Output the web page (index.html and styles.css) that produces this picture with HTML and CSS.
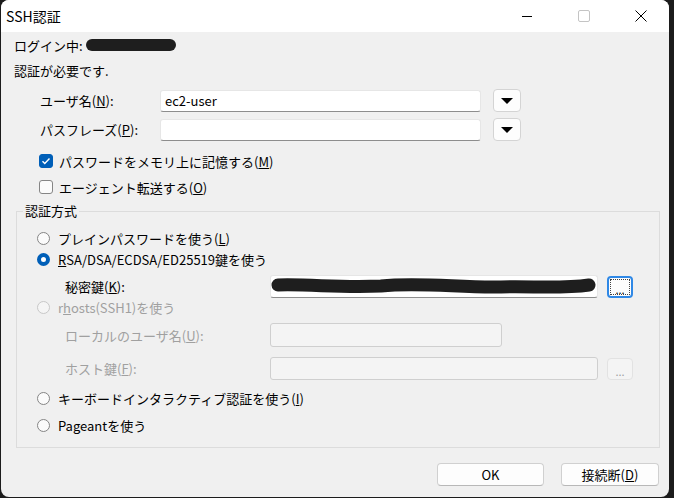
FILE: index.html
```html
<!DOCTYPE html>
<html lang="ja">
<head>
    <meta charset="UTF-8">
    <title>SSH認証</title>
    <link rel="stylesheet" href="styles.css">
</head>
<body>

<div class="window">
    <div class="titlebar">
        <span class="title">SSH認証</span>
        <div class="controls">
            <span class="ctl"><svg width="12" height="12" viewBox="0 0 12 12"><path d="M1 6.5h10" stroke="#000" stroke-width="1"/></svg></span>
            <span class="ctl"><svg width="12" height="12" viewBox="0 0 12 12"><rect x="0.5" y="0.5" width="11" height="11" rx="1.5" fill="none" stroke="#c4c4c4"/></svg></span>
            <span class="ctl"><svg width="12" height="12" viewBox="0 0 12 12"><path d="M0.5 0.5l11 11M11.5 0.5l-11 11" stroke="#000" stroke-width="1"/></svg></span>
        </div>
    </div>

    <div class="content">
        <div class="line">ログイン中:<span class="redact"></span></div>
        <div class="line second">認証が必要です.</div>

        <div class="field-row">
            <label class="field-label">ユーザ名(<u>N</u>):</label>
            <div class="textbox">ec2-user</div>
            <button class="drop"><span class="tri"></span></button>
        </div>
        <div class="field-row next">
            <label class="field-label">パスフレーズ(<u>P</u>):</label>
            <div class="textbox"></div>
            <button class="drop"><span class="tri"></span></button>
        </div>

        <div class="check-row first">
            <span class="checkbox checked">
                <svg width="10" height="10" viewBox="0 0 10 10"><path d="M1.5 5.2l2.3 2.3 4.7-4.9" fill="none" stroke="#fff" stroke-width="1.4"/></svg>
            </span>
            パスワードをメモリ上に記憶する(<u>M</u>)
        </div>
        <div class="check-row">
            <span class="checkbox"></span>
            エージェント転送する(<u>O</u>)
        </div>

        <fieldset class="group">
            <legend>認証方式</legend>

            <div class="radio-row r1"><span class="radio"></span>プレインパスワードを使う(<u>L</u>)</div>
            <div class="radio-row r2"><span class="radio on"></span><u>R</u>SA/DSA/ECDSA/ED25519鍵を使う</div>

            <div class="sub-row key-row">
                <label class="sub-label">秘密鍵(<u>K</u>):</label>
                <div class="textbox wide">
                    <svg class="scribble" width="326" height="22" viewBox="0 0 326 22">
                        <path d="M7 9 C 40 8, 70 12, 110 10 C 150 6, 190 12, 230 11 C 260 10, 290 13, 318 9" fill="none" stroke="#1e1e1e" stroke-width="13" stroke-linecap="round"/>
                    </svg>
                </div>
                <button class="dots focused"><span>...</span></button>
            </div>

            <div class="radio-row disabled rh"><span class="radio"></span>r<u>h</u>osts(SSH1)を使う</div>

            <div class="sub-row local-row disabled">
                <label class="sub-label">ローカルのユーザ名(<u>U</u>):</label>
                <div class="textbox mid off"></div>
            </div>
            <div class="sub-row host-row disabled">
                <label class="sub-label">ホスト鍵(<u>F</u>):</label>
                <div class="textbox wide off"></div>
                <button class="dots off"><span>...</span></button>
            </div>

            <div class="radio-row kb"><span class="radio"></span>キーボードインタラクティブ認証を使う(<u>I</u>)</div>
            <div class="radio-row pg"><span class="radio"></span>Pageantを使う</div>
        </fieldset>

        <div class="buttons">
            <button class="btn ok">OK</button>
            <button class="btn cut">接続断(<u>D</u>)</button>
        </div>
    </div>
</div>

</body>
</html>
```

FILE: styles.css
```css
/* Page / window frame */
body {
    margin: 0;
    background-color: #1c1c1c;
    font-family: "Noto Sans CJK JP", "Noto Sans", sans-serif;
    font-size: 13px;
    color: #000;
}

.window {
    margin-left: 1px;
    width: 668px;
    height: 497px;
    background-color: #f0f0f0;
    border-radius: 8px;
    overflow: hidden;
}

/* Title bar */
.titlebar {
    height: 32px;
    background-color: #fff;
    display: flex;
    align-items: center;
    justify-content: space-between;
}

.title {
    padding-left: 5px;
    font-size: 14px;
}

.controls {
    display: flex;
    height: 32px;
}

.ctl {
    width: 57px;
    display: flex;
    align-items: center;
    justify-content: center;
}

/* Content */
.content {
    padding: 0 10px 0 13px;
}

.line {
    height: 26px;
    display: flex;
    align-items: center;
}

.line.second {
    height: 24px;
}

.redact {
    display: inline-block;
    width: 90px;
    height: 12px;
    margin-left: 3px;
    background-color: #1e1e1e;
    border-radius: 6px;
}

.field-row {
    display: flex;
    align-items: center;
    height: 23px;
    margin-top: 7px;
}

.field-row.next {
    margin-top: 6px;
}

.field-label {
    width: 146px;
    padding-left: 26px;
    box-sizing: border-box;
    flex-shrink: 0;
}

.textbox {
    width: 321px;
    height: 22px;
    box-sizing: border-box;
    background-color: #fff;
    border: 1px solid #e6e6e6;
    border-bottom-color: #8d8d8d;
    border-radius: 3px;
    padding: 0 4px;
    display: flex;
    align-items: center;
    position: relative;
}

.drop {
    margin-left: 12px;
    width: 28px;
    height: 23px;
    background-color: #fdfdfd;
    border: 1px solid #d4d4d4;
    border-radius: 4px;
    display: flex;
    align-items: center;
    justify-content: center;
    padding: 0;
}

.tri {
    width: 0;
    height: 0;
    border-left: 6px solid transparent;
    border-right: 6px solid transparent;
    border-top: 6px solid #000;
}

/* Checkboxes */
.check-row {
    display: flex;
    align-items: center;
    height: 20px;
    margin-top: 6px;
    padding-left: 25px;
}

.check-row.first {
    margin-top: 10px;
}

.checkbox {
    width: 14px;
    height: 14px;
    box-sizing: border-box;
    border: 1px solid #858585;
    border-radius: 3px;
    background-color: #fbfbfb;
    margin-right: 6px;
    display: flex;
    align-items: center;
    justify-content: center;
}

.checkbox.checked {
    background-color: #005fb8;
    border-color: #005fb8;
}

/* Group box */
.group {
    margin: 5px 0 0 2px;
    width: 644px;
    box-sizing: border-box;
    border: 1px solid #dcdcdc;
    padding: 0 0 12px 0;
    min-width: 0;
}

.group legend {
    margin-left: 6px;
    padding: 0 2px;
    line-height: 18px;
}

.radio-row {
    display: flex;
    align-items: center;
    height: 21px;
    padding-left: 20px;
}

.radio-row.r1 {
    margin-top: 8px;
}

.radio-row.rh {
    height: 18px;
}

.radio-row.kb {
    margin-top: 8px;
    height: 20px;
}

.radio-row.pg {
    margin-top: 7px;
    height: 20px;
}

.radio {
    width: 13px;
    height: 13px;
    box-sizing: border-box;
    border: 1px solid #858585;
    border-radius: 50%;
    background-color: #fbfbfb;
    margin-right: 8px;
}

.radio.on {
    border: 4px solid #005fb8;
    background-color: #fff;
}

.disabled {
    color: #a0a0a0;
}

.disabled .radio {
    border-color: #c8c8c8;
    background-color: #f5f5f5;
}

.sub-row {
    display: flex;
    align-items: center;
    height: 23px;
}

.key-row {
    margin-top: 5px;
}

.local-row {
    margin-top: 7px;
    height: 24px;
}

.host-row {
    margin-top: 10px;
}

.sub-label {
    width: 253px;
    padding-left: 48px;
    box-sizing: border-box;
    flex-shrink: 0;
}

.textbox.wide {
    width: 328px;
    height: 23px;
    padding: 0;
}

.textbox.mid {
    width: 232px;
    height: 24px;
}

.textbox.off {
    background-color: #f4f4f4;
    border-color: #cfcfcf;
}

.scribble {
    position: absolute;
    left: 0;
    top: 0;
}

.dots {
    margin-left: 9px;
    width: 26px;
    height: 22px;
    box-sizing: border-box;
    background-color: #fdfdfd;
    border: 1px solid #d4d4d4;
    border-radius: 4px;
    padding: 0;
    font-family: inherit;
    font-size: 11px;
    display: flex;
    align-items: center;
    justify-content: center;
}

.dots span {
    line-height: 8px;
    margin-top: 4px;
}

.dots.focused {
    border: 2px solid #2f88e6;
    position: relative;
}

.dots.focused::after {
    content: "";
    position: absolute;
    left: 1px;
    top: 1px;
    right: 1px;
    bottom: 1px;
    border: 1px dotted #444;
}

.dots.off {
    color: #a0a0a0;
    border-color: #e2e2e2;
    background-color: #f4f4f4;
}

/* Bottom buttons */
.buttons {
    display: flex;
    justify-content: flex-end;
    gap: 17px;
    margin-top: 15px;
}

.btn {
    height: 23px;
    background-color: #fdfdfd;
    border: 1px solid #d0d0d0;
    border-bottom-color: #b8b8b8;
    border-radius: 4px;
    font-family: inherit;
    font-size: 13px;
    padding: 0;
}

.btn.ok {
    width: 107px;
}

.btn.cut {
    width: 98px;
}
```
